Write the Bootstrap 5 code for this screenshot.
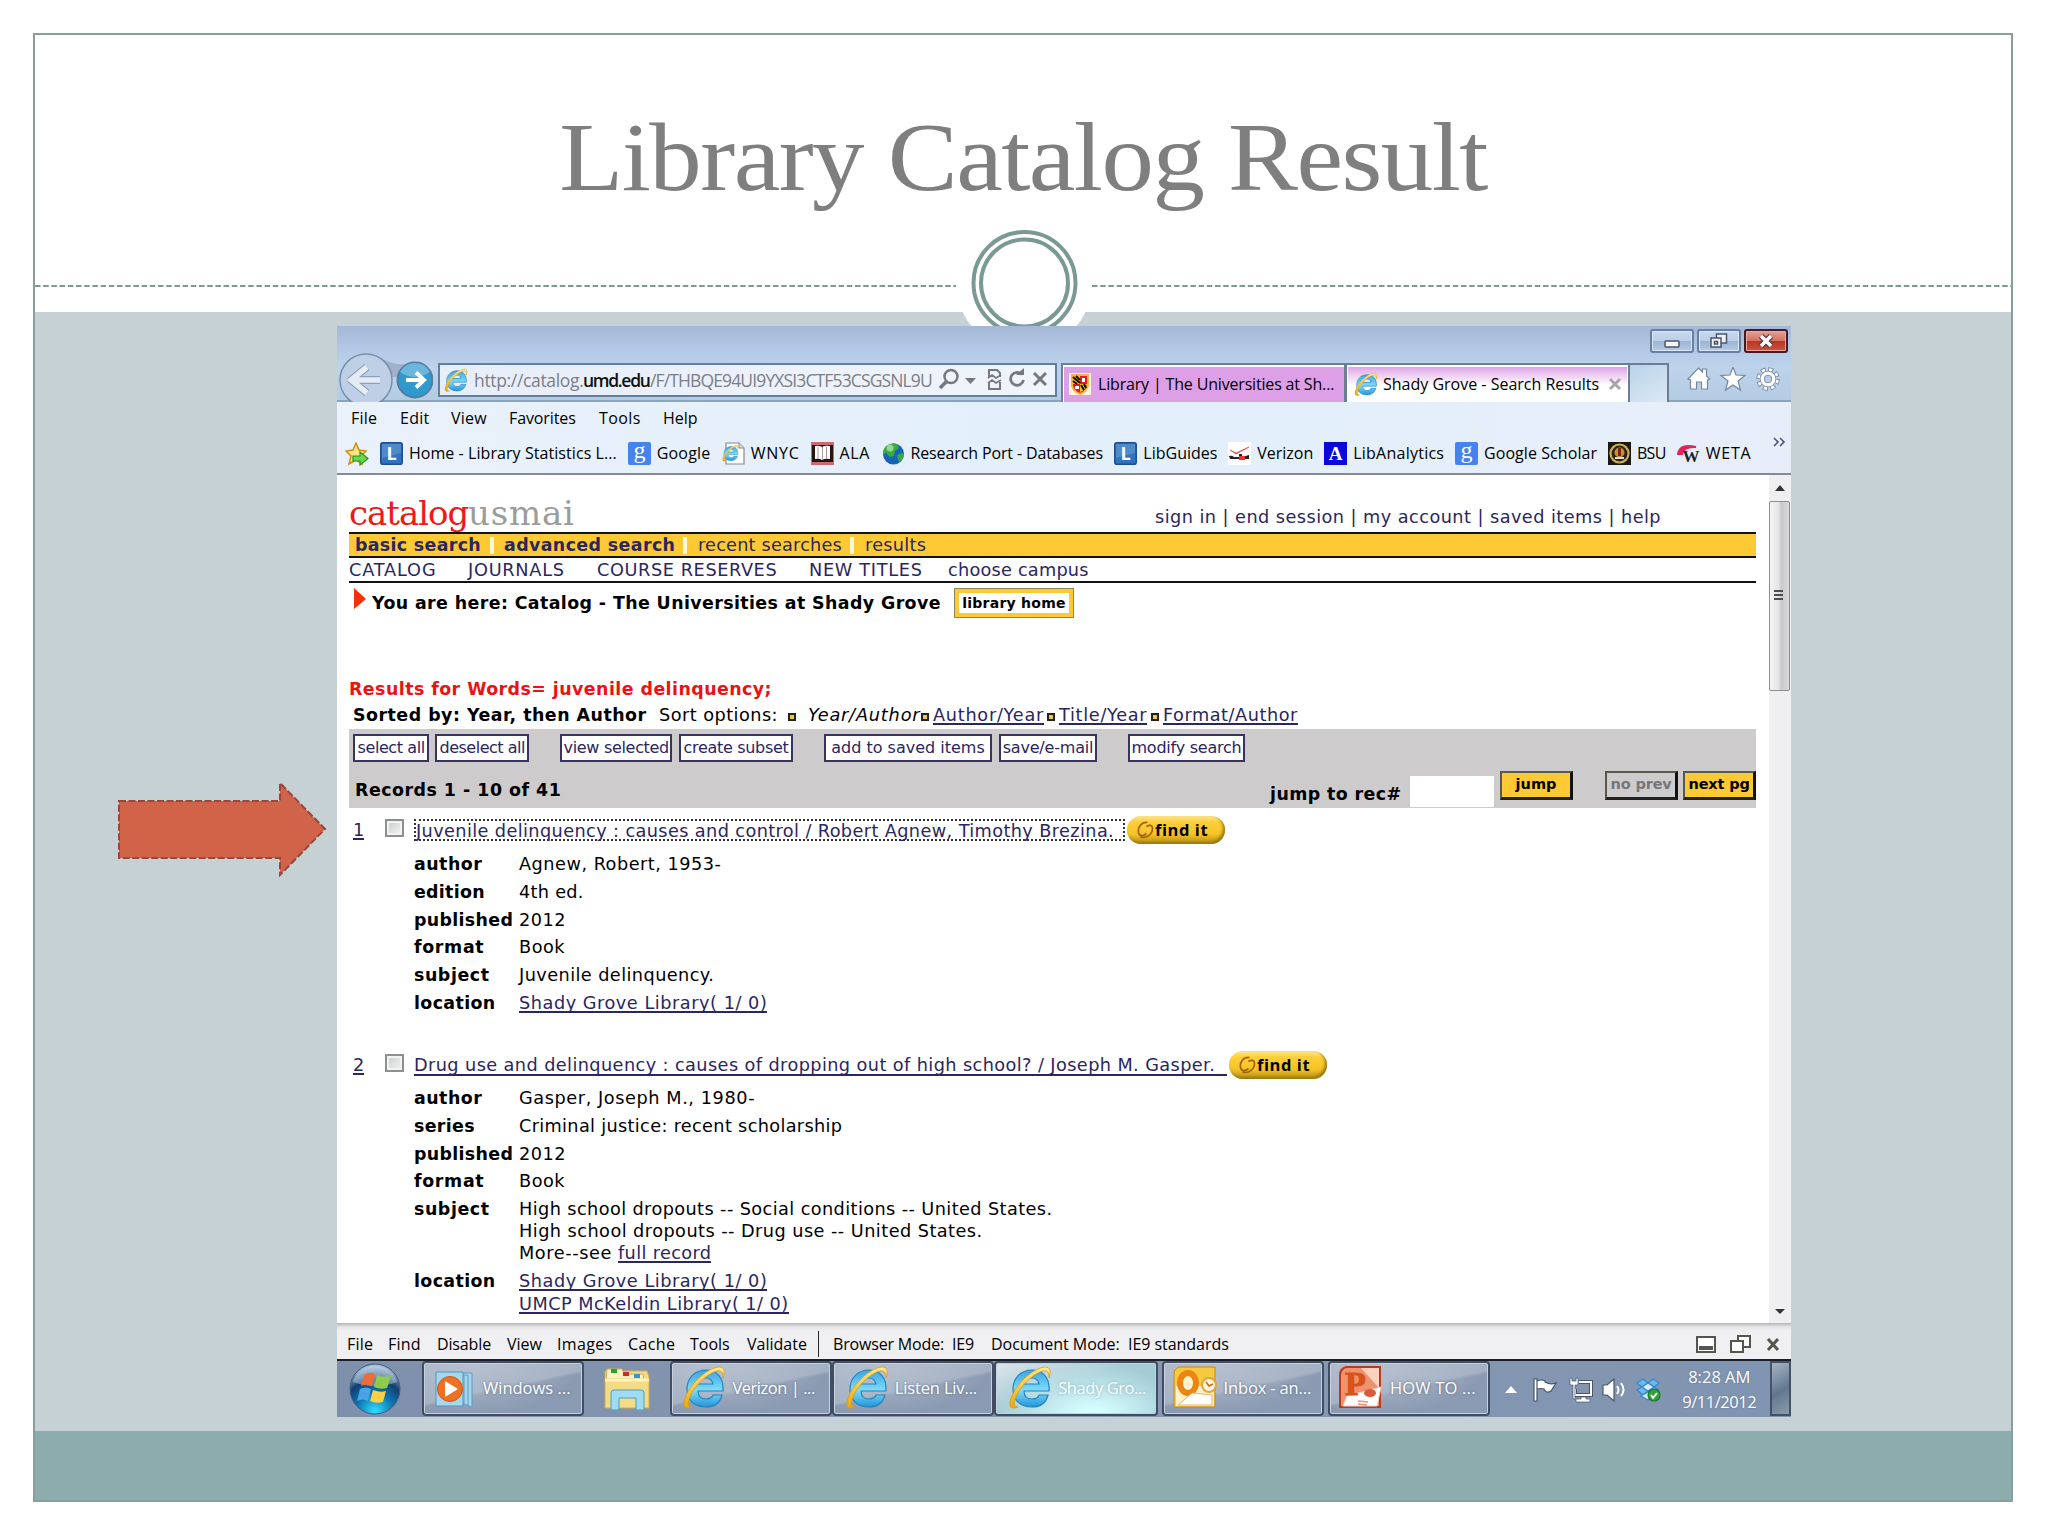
<!DOCTYPE html>
<html lang="en">
<head>
<meta charset="utf-8">
<title>Library Catalog Result</title>
<link href="https://cdn.jsdelivr.net/npm/bootstrap@5.3.0/dist/css/bootstrap.min.css" rel="stylesheet">
<style>
body{margin:0;background:#fff;width:2048px;height:1536px;overflow:hidden;color:#000}
span[data-w]{display:inline-block;white-space:pre;flex:none}
svg{display:block;flex:none}
.slide{margin:33px 35px 0 33px;height:1469px;border:2px solid #86a09c;background:#fff}
.slide-head{height:277px}
.slide-title{font:400 98px/112px "Liberation Serif",serif;color:#7f7f7f;padding-top:66px;margin:0;transform:scaleX(1.07)}
.stage{height:1119px;background:#c5d1d4;padding:14px 0 0 302px}
.slide-foot{height:69px;background:#8cacad}
.ornament{left:35px;top:225px;width:1976px;height:101px}
.pointer{left:116px;top:779px}
/* browser window */
.win{width:1454px;height:1091px;background:#fff;font-family:"Open Sans","Noto Sans",sans-serif;font-size:16px}
.chrome{height:76px;background:linear-gradient(#a3b8d6,#b1c5e3 25%,#bdd3ec 55%,#b4cbe4);border-bottom:2px solid #8ba4bd}
.caps{height:37px;padding:3px 3px 0 0;gap:3px}
.cap-btn{width:44px;height:24px;border:2px solid #66809f;border-radius:3px;background:linear-gradient(#c7d8ec,#bccfe7 48%,#9cb5d3 52%,#b5cbe6);box-shadow:inset 0 0 0 1px #d9e6f5}
.cap-close{border-color:#431b27;background:linear-gradient(#e2a297,#d5705f 48%,#bb3524 52%,#c95440);box-shadow:inset 0 0 0 1px #e8aaa0}
.nav-row{height:38px}
.addr{margin-left:5px;width:619px;height:34px;border:2px solid #61809f;background:linear-gradient(90deg,#e7eef9,#f0f4fb);color:#7b7e85;font-size:17.5px}
.addr b{color:#111;font-weight:600}
.tab-a{width:285px;height:39px;margin-left:4px;border:2px solid #6b7e94;border-bottom:0;background:#dd9fe6;box-shadow:inset 1px 2px #fff;padding-left:6px;gap:7px}
.tab-b{width:284px;height:39px;border:2px solid #6b7e94;border-left-width:1px;border-bottom:0;background:linear-gradient(#da9be4,#fff 55%);box-shadow:inset 1px 2px #fff,inset -1px 0 #fff;padding-left:7px}
.tab-n{width:39px;height:39px;border:2px solid #6b7e94;border-left:0;border-bottom:0;background:linear-gradient(150deg,#b9d3e8,#dce8f6)}
.bars{height:73px;background:linear-gradient(90deg,#eaf1fb,#e3effa 45%,#e3effa 65%,#e8eef9);border-bottom:2px solid #868b93}
.menu-row{height:32px;padding-left:14px;line-height:32px}
.fav-row{height:39px;padding-left:8px;gap:11px;line-height:23px}
.fav{gap:5.9px}
.view{height:848px}
/* catalog page */
.page{width:1432px;padding-left:12px;font-family:"DejaVu Sans",Verdana,sans-serif;font-size:17.7px;line-height:22px}
.page a,.ink{color:#2a2660;text-decoration:none}
.page a.ul{border-bottom:2px solid #2a2660;display:inline-block;height:20px;line-height:21px}
.page b{font-weight:700;font-size:17.4px}
.wide{width:1407px}
.logo{font:34px/40px "DejaVu Serif",serif}
.logo-red{color:#f01818}
.logo-gray{color:#9c9c9c}
.ybar{height:26px;border-top:2px solid #111;border-bottom:2px solid #111;background:#fdca36;line-height:23px;padding-top:1px}
.sep{width:4px;height:17px;background:#fff6dc}
.cbar{height:25px;border-bottom:2px solid #111;line-height:24px}
.home-btn{width:120px;height:30px;border:1px solid #8e8555;background:#fdca36;padding:4px}
.home-btn>div{background:#fff;font-weight:700;font-size:14px;line-height:20px;height:20px;text-align:center}
.sq{width:8px;height:8px;border:2px solid #222;background:#f5c83a}
.tools{height:79px;background:#cdcbcc}
.tbtn{height:28px;border:2px solid #39345f;background:#fff;color:#2a2660;font-size:16px;line-height:23px;text-align:center}
.ybtn{width:73px;height:29px;border:2px solid #565a4a;border-right:3px solid #111;border-bottom:3px solid #222;background:#fdca36;font-weight:700;font-size:14.5px;line-height:23px;text-align:center}
.ybtn.off{background:#cdcbcc;color:#77757a}
.rec-no{width:36px;padding-left:4px}
.chk{width:19px;height:18px;border:2px solid #8e8f8f;background:linear-gradient(135deg,#c9cccf,#f4f4f4);box-shadow:inset 0 0 0 2px #f2f2f2}
.rt{margin-left:10px}
.focus-t{border:2px dotted #333;height:22px;line-height:20px;width:711px;margin-top:-1px}
.under-t{border-bottom:2px solid #2a2660;height:21px;line-height:21px;width:813px;margin-top:1px}
.find{width:98px;height:28px;border-radius:14px;background:linear-gradient(#ffe48f,#fccf38 22%,#f5c425 65%,#b38c14);box-shadow:inset -2px -2px 3px #9a7a10;font:700 16.5px/26px "Open Sans",sans-serif;padding:0 0 1px 9px}
.fld{padding:0 0 6px 65px;line-height:21.8px}
.fld>b{width:105px;flex:none}
/* scrollbar */
.sbar{width:22px;background:#efeff1}
.thumb{width:21px;height:190px;border:1.5px solid #8d8e91;border-radius:2px;background:linear-gradient(90deg,#f5f5f6,#e4e4e6 45%,#c9c9cc 60%,#d8d8db)}
/* developer tools bar and taskbar */
.dev{height:38px;background:linear-gradient(#b5b5b8,#e6e5e7 4px,#f0eff1 8px);border-bottom:2px solid #191e28;line-height:42px}
.task{height:56px;background:linear-gradient(90deg,#7f90ac,#8797b0 50%,#8095b2);color:#fff;font-size:16.5px}
.tb{height:55px;border:2px solid #414d62;border-radius:4px;box-shadow:inset 0 0 0 1px #c7d1dd;text-shadow:0 0 3px #55657c}
.tb.flat{background:radial-gradient(ellipse at 30% 0,#b6c0cf,transparent 70%),linear-gradient(168deg,#a4b1c3 48%,#8b9ab1 52%,#8a9bb4)}
.tb.on{background:radial-gradient(ellipse at 60% 110%,#d8ffff 10%,transparent 70%),linear-gradient(160deg,#dce5ea,#a6ccd5 45%,#9fc9d4);text-shadow:0 0 3px #7ea8b6}
.clock{line-height:24.5px;text-shadow:0 0 2px #5e6f87}
.peek{width:21px;height:55px;border:2px solid #445263;background:linear-gradient(150deg,#a7b4c2,#7488a0 40%,#62778f 55%,#8a9cad)}
</style>
<script src="https://cdn.jsdelivr.net/npm/bootstrap@5.3.0/dist/js/bootstrap.bundle.min.js"></script>
</head>
<body class="position-relative">
<svg width="0" height="0" class="position-absolute">
<defs>
<linearGradient id="gb" x1="0" y1="0" x2="0" y2="1"><stop offset="0" stop-color="#3aa5e2"/><stop offset=".55" stop-color="#7ddcfb"/><stop offset="1" stop-color="#2196d8"/></linearGradient>
<linearGradient id="gy" x1="0" y1="0" x2="0" y2="1"><stop offset="0" stop-color="#ffe98f"/><stop offset="1" stop-color="#e9a70d"/></linearGradient>
<radialGradient id="orb" cx=".5" cy=".95" r=".9"><stop offset="0" stop-color="#2fe0ff"/><stop offset=".4" stop-color="#0e78b4"/><stop offset=".7" stop-color="#123f70"/><stop offset="1" stop-color="#9fb8d0"/></radialGradient>
<symbol id="ie" viewBox="0 0 44 44"><path d="M41 26H16c0 5 3 8 8 8 3 0 6-1 7-4h9c-2 8-8 12-16 12C12 42 5 35 5 24S13 5 24 5s18 8 17 21zM16 19h15c-1-4-3-6-7-6s-7 2-8 6z" fill="url(#gb)" stroke="#2583bd" stroke-width="1.2"/><path d="M41 13C43 7 43 2 37 2 25 3 8 19 3 33c-3 9 0 12 7 9-4 0-5-3-2-10C13 20 26 8 35 6c4-1 6 1 6 7z" fill="url(#gy)" stroke="#d99b13" stroke-width=".8"/></symbol>
<symbol id="lib" viewBox="0 0 23 23"><rect x=".8" y=".8" width="21.4" height="21.4" rx="2" fill="#3273bd" stroke="#1c4f93" stroke-width="1.6"/><path d="M2 2h19v9L2 16z" fill="#6ea2da" opacity=".5"/><text x="6.500" y="17.500" font-family="Open Sans" font-weight="700" font-size="18" fill="#fff">L</text></symbol>
<symbol id="goo" viewBox="0 0 23 23"><rect width="23" height="23" rx="2" fill="#4584ee"/><text x="11.500" y="16" text-anchor="middle" font-family="Liberation Serif" font-size="24" fill="#fff">g</text></symbol>
<symbol id="swirl" viewBox="0 0 18 20"><path d="M11 2.500C5 2 1 7 2 12.500c1 4 4.500 4 8 1M4 17c6 2 12-3 12-8.500 0-3.500-3-4-6-2" fill="none" stroke="#a4600f" stroke-width="1.700"/></symbol>
</defs>
</svg>

<div class="slide">
  <div class="slide-head"><h1 class="slide-title text-center"><span data-w="867">Library Catalog Result</span></h1></div>
  <div class="stage">
    <div class="win overflow-hidden">
      <!-- window frame, address bar and tabs -->
      <div class="chrome">
        <div class="caps d-flex justify-content-end">
          <div class="cap-btn"><svg width="40" height="20"><rect x="13" y="10" width="14" height="6" rx="1" fill="#f5f5f5" stroke="#4b5668" stroke-width="1.500"/></svg></div>
          <div class="cap-btn"><svg width="40" height="20" fill="#eef2f7" stroke="#4b5668" stroke-width="1.500"><rect x="17.500" y="3" width="10" height="9"/><rect x="12" y="7" width="10" height="9"/><rect x="15.500" y="10.500" width="3" height="2.500"/></svg></div>
          <div class="cap-btn cap-close"><svg width="40" height="20"><path d="M15 5l10 10M25 5L15 15" stroke="#5a3440" stroke-width="6"/><path d="M15 5l10 10M25 5L15 15" stroke="#fff" stroke-width="3.500"/></svg></div>
        </div>
        <div class="nav-row d-flex align-items-start">
          <svg width="96" height="49" style="margin-top:-10px" viewBox="0 0 96 49"><path d="M46 6q14 8 30 4l-8 14H54z" fill="#9eb2cb"/><circle cx="29" cy="27" r="26" fill="#bfd0e6" stroke="#7990ad" stroke-width="1.500"/><path d="M30 14L14 27l16 13M16 27h27" fill="none" stroke="#8ba0bd" stroke-width="8" stroke-linejoin="round"/><path d="M30 14L14 27l16 13M16 27h27" fill="none" stroke="#e4ebf4" stroke-width="5.500"/><circle cx="78" cy="27" r="17.500" fill="#2f9acb" stroke="#557c9c" stroke-width="2"/><path d="M63 19a17 17 0 0 1 30 0q-15 10-30 0z" fill="#6ab6dc"/><path d="M69 27h17M79 19.500l8 7.500-8 7.500" fill="none" stroke="#fff" stroke-width="4"/></svg>
          <div class="addr d-flex align-items-center">
            <svg width="24" height="24" class="ms-1"><use href="#ie"/></svg>
            <div class="d-flex" style="margin-left:6px"><span data-w="109">http://catalog.</span><b><span data-w="67">umd.edu</span></b><span data-w="282">/F/THBQE94UI9YXSI3CTF53CSGSNL9U</span></div>
            <svg width="112" height="26" class="ms-1" fill="none" stroke="#747880"><circle cx="15" cy="9.500" r="6.500" stroke-width="2.500"/><path d="M11 14l-7 7" stroke-width="3.500"/><path d="M29 11h11l-5.500 6z" fill="#747880" stroke="none"/><path d="M53 10V3h8l3 3v4M53 15v7h11v-7" stroke-width="2"/><path d="M52 11l4-3 4 3 5-3M52 16l4-3 4 3 5-3" stroke-width="1.700"/><path d="M86 7.500a6.500 6.500 0 1 0 1.500 5.500" stroke-width="2.800"/><path d="M80 8h8V1z" fill="#747880" stroke="none"/><path d="M98 6l12 12M110 6L98 18" stroke-width="3"/></svg>
          </div>
          <div class="tab-a d-flex align-items-center">
            <svg width="22" height="22"><rect width="22" height="22" fill="#fff4dd"/><path d="M3 2h16v11q-2 6-8 8-6-2-8-8z" fill="#e01d24" stroke="#f0b352" stroke-width="2"/><path d="M4 3h7v8H4z" fill="#f6c21c"/><path d="M4 4l7 6M7 3l4 4M4 8l4 3" stroke="#111" stroke-width="2"/><path d="M11 11h7q-1 6-7 8z" fill="#f6c21c"/><path d="M12 12l3 5M15 11l2 4" stroke="#111" stroke-width="2"/><path d="M13 5h3v4h-3zM6 13h4v3H6z" fill="#fff"/></svg>
            <span data-w="236">Library | The Universities at Sh...</span>
          </div>
          <div class="tab-b d-flex align-items-center" style="gap:5px">
            <svg width="24" height="24"><use href="#ie"/></svg><span data-w="216">Shady Grove - Search Results</span>
            <svg width="14" height="14" class="ms-1"><path d="M2 2l10 10M12 2L2 12" stroke="#a9a5a9" stroke-width="3"/></svg>
          </div>
          <div class="tab-n"></div>
          <svg width="96" height="26" style="margin:4px 0 0 18px" fill="#fff" stroke="#75869d" stroke-width="1.200"><path d="M1 12L11.500 1l4 4V2h4v7l3 3-2 1v9h-6v-7h-5v7h-6v-9z"/><path d="M46 0l3 8 9 .5-7 5.500 2.500 9L46 18l-7.500 5 2.500-9-7-5.500 9-.5z"/><circle cx="81" cy="12" r="9" fill="none" stroke="#75869d" stroke-width="5.500" stroke-dasharray="4.570 2.500"/><circle cx="81" cy="12" r="9" fill="none" stroke="#fff" stroke-width="3.800" stroke-dasharray="3 4.070" stroke-dashoffset="-.8"/><circle cx="81" cy="12" r="5.800" fill="#b9cde6" stroke="#75869d" stroke-width="5"/><circle cx="81" cy="12" r="5.800" fill="none" stroke="#fff" stroke-width="3.400"/></svg>
        </div>
      </div>
      <div class="bars">
        <div class="menu-row d-flex"><span data-w="49" data-t="26">File</span><span data-w="51" data-t="29">Edit</span><span data-w="58" data-t="36">View</span><span data-w="90" data-t="67">Favorites</span><span data-w="64" data-t="42">Tools</span><span data-w="35">Help</span></div>
        <div class="d-flex justify-content-between">
        <div class="fav-row d-flex align-items-center">
          <svg width="24" height="24"><path d="M11 1l3 7 7 1-5 5 1 8-6-4-7 4 2-8-5-5 7-1z" fill="#fce487" stroke="#d08c12" stroke-width="1.500"/><path d="M8 14h7v-4l8 6.500-8 6.500v-4H8z" fill="#6fd54b" stroke="#2a9320" stroke-width="1.200"/></svg>
          <div class="fav d-flex align-items-center"><svg width="23" height="23"><use href="#lib"/></svg><span data-w="208">Home - Library Statistics L...</span></div>
          <div class="fav d-flex align-items-center"><svg width="23" height="23"><use href="#goo"/></svg><span data-w="54">Google</span></div>
          <div class="fav d-flex align-items-center"><svg width="23" height="23"><path d="M4 1h13l5 5v16H4z" fill="#fff" stroke="#888" stroke-width="1.200"/><path d="M17 1v5h5" fill="#ddd" stroke="#888"/><svg x="0" y="2" width="17" height="18"><use href="#ie"/></svg></svg><span data-w="49">WNYC</span></div>
          <div class="fav d-flex align-items-center"><svg width="23" height="23"><path fill="#c96a70" d="M0 0h23v23H0z"/><path fill="#2a1512" d="M1 3h21v17H1z"/><path d="M4 4q4-1 7 1 3-2 8-1v13q-5-1-8 1-3-2-7-1z" fill="#fff"/><path d="M11.500 5v13M7 5v12M15.500 5v12" stroke="#a99"/></svg><span data-w="31">ALA</span></div>
          <div class="fav d-flex align-items-center"><svg width="23" height="23"><circle cx="11.500" cy="12" r="10.500" fill="#1763b8"/><path d="M4 4q6-4 11-2l2 4-4 3-1 5-4 1-4-4-3 1q0-5 3-8zM15 13l5-2 2 2q-1 5-5 7z" fill="#37ab3f"/><circle cx="8" cy="6" r="3.500" fill="#d7f7c8" opacity=".6"/></svg><span data-w="193">Research Port - Databases</span></div>
          <div class="fav d-flex align-items-center"><svg width="23" height="23"><use href="#lib"/></svg><span data-w="74">LibGuides</span></div>
          <div class="fav d-flex align-items-center"><svg width="23" height="23"><path fill="#fff" d="M0 0h23v23H0z"/><path d="M2 8l6 3 13-6-13 7z" fill="#e23a3a" stroke="#e23a3a" stroke-width=".6"/><path d="M1 14q3-1 5 1h5v-3h3v3l7-2v4H2z" fill="#222"/><path d="M11 14h6v4h-6z" fill="#e33"/></svg><span data-w="56">Verizon</span></div>
          <div class="fav d-flex align-items-center"><svg width="23" height="23"><path fill="#0808d8" d="M0 0h23v23H0z"/><text x="11.500" y="18" text-anchor="middle" font-family="Liberation Serif" font-weight="700" font-size="19" fill="#fff">A</text></svg><span data-w="91">LibAnalytics</span></div>
          <div class="fav d-flex align-items-center"><svg width="23" height="23"><use href="#goo"/></svg><span data-w="113">Google Scholar</span></div>
          <div class="fav d-flex align-items-center"><svg width="23" height="23"><path fill="#1b1712" d="M0 0h23v23H0z"/><circle cx="11.500" cy="11.500" r="9" fill="#2c2315" stroke="#cdae52" stroke-width="2.200"/><circle cx="11.500" cy="10.500" r="5" fill="#c78c35"/><path d="M11.500 6v8" stroke="#7a2415" stroke-width="3"/><path d="M7 16h9" stroke="#ddd" stroke-width="2"/></svg><span data-w="29">BSU</span></div>
          <div class="fav d-flex align-items-center"><svg width="23" height="23"><path d="M1 12Q3 1 19 5q-12-1-14 7z" fill="#e0245c" stroke="#e0245c" stroke-width="2"/><text x="14" y="20" text-anchor="middle" font-family="Liberation Serif" font-weight="700" font-size="17" fill="#222">W</text></svg><span data-w="46">WETA</span></div>
        </div>
        <svg width="14" height="12" class="me-1" style="margin-top:3px"><path d="M1 1l4 4-4 4M7 1l4 4-4 4" fill="none" stroke="#4a5273" stroke-width="1.600"/></svg>
        </div>
      </div>

      <div class="view d-flex">
        <div class="page">
          <div class="wide d-flex justify-content-between" style="height:57px;padding-top:18px">
            <div class="logo"><span data-w="119" class="logo-red">catalog</span><span data-w="107" class="logo-gray">usmai</span></div>
            <div class="ink" style="padding:13px 95px 0 0;height:39px"><span data-w="506">sign in | end session | my account | saved items | help</span></div>
          </div>
          <div class="ybar wide d-flex align-items-center ink"><b style="margin-left:6px"><span data-w="126">basic search</span></b><i class="sep" style="margin:0 10px 0 9px"></i><b><span data-w="171">advanced search</span></b><i class="sep" style="margin:0 11px 0 8px"></i><span data-w="144">recent searches</span><i class="sep" style="margin:0 11px 0 8px"></i><span data-w="61">results</span></div>
          <div class="cbar wide d-flex ink"><span data-w="119" data-t="87">CATALOG</span><span data-w="129" data-t="97">JOURNALS</span><span data-w="212" data-t="180">COURSE RESERVES</span><span data-w="139" data-t="114">NEW TITLES</span><span data-w="141">choose campus</span></div>
          <div class="d-flex align-items-center" style="margin-top:5px;height:30px">
            <svg width="13" height="22" style="margin:-9px 5px 0 5px"><path d="M0 0l12 11L0 21z" fill="#f5300a"/></svg>
            <b style="margin-top:-1px"><span data-w="569">You are here: Catalog - The Universities at Shady Grove</span></b>
            <div class="home-btn" style="margin-left:13px"><div><span data-w="104">library home</span></div></div>
          </div>
          <div style="margin-top:60px;color:#ee1111"><b><span data-w="423">Results for Words= juvenile delinquency;</span></b></div>
          <div class="d-flex align-items-center" style="margin-top:4px;height:22px;padding-left:4px"><b><span data-w="294">Sorted by: Year, then Author</span></b><span data-w="119" style="margin-left:12px">Sort options:</span><i class="sq" style="margin:4px 12px 0 10px"></i><i><span data-w="112">Year/Author</span></i><i class="sq" style="margin:4px 4px 0 1px"></i><a class="ul"><span data-w="111">Author/Year</span></a><i class="sq" style="margin:4px 4px 0 3px"></i><a class="ul"><span data-w="88">Title/Year</span></a><i class="sq" style="margin:4px 4px 0 4px"></i><a class="ul"><span data-w="135">Format/Author</span></a></div>
          <div class="tools wide" style="margin-top:3px">
            <div class="d-flex" style="padding:5px 0 0 4px">
              <div class="tbtn" style="width:76px"><span data-w="67">select all</span></div>
              <div class="tbtn" style="width:94px;margin-left:6px"><span data-w="85">deselect all</span></div>
              <div class="tbtn" style="width:112px;margin-left:31px"><span data-w="105">view selected</span></div>
              <div class="tbtn" style="width:114px;margin-left:7px"><span data-w="105">create subset</span></div>
              <div class="tbtn" style="width:168px;margin-left:31px"><span data-w="154">add to saved items</span></div>
              <div class="tbtn" style="width:98px;margin-left:7px"><span data-w="91">save/e-mail</span></div>
              <div class="tbtn" style="width:117px;margin-left:31px"><span data-w="110">modify search</span></div>
            </div>
            <div class="d-flex" style="height:46px">
              <b style="margin:17px 0 0 6px"><span data-w="206">Records 1 - 10 of 41</span></b>
              <b class="ms-auto" style="margin-top:21px"><span data-w="132">jump to rec#</span></b>
              <div class="bg-white" style="width:84px;height:31px;margin:14px 6px 0 8px"></div>
              <div class="ybtn" style="margin-top:9px"><span data-w="41">jump</span></div>
              <div class="ybtn off" style="margin:9px 5px 0 32px"><span data-w="61">no prev</span></div>
              <div class="ybtn" style="margin-top:9px"><span data-w="61">next pg</span></div>
            </div>
          </div>

          <div class="d-flex align-items-center" style="margin-top:8px;height:28px">
            <div class="rec-no"><a class="ul"><span data-w="11">1</span></a></div><div class="chk" style="margin-top:-4px"></div>
            <a class="rt focus-t"><span data-w="698">Juvenile delinquency : causes and control / Robert Agnew, Timothy Brezina.</span></a>
            <div class="find d-flex align-items-center" style="margin-left:2px"><svg width="19" height="20"><use href="#swirl"/></svg><span data-w="53">find it</span></div>
          </div>
          <div style="padding-top:10px;height:207px">
            <div class="fld d-flex"><b><span data-w="68">author</span></b><span data-w="202">Agnew, Robert, 1953-</span></div>
            <div class="fld d-flex"><b><span data-w="71">edition</span></b><span data-w="65">4th ed.</span></div>
            <div class="fld d-flex"><b><span data-w="99">published</span></b><span data-w="47">2012</span></div>
            <div class="fld d-flex"><b><span data-w="70">format</span></b><span data-w="46">Book</span></div>
            <div class="fld d-flex"><b><span data-w="76">subject</span></b><span data-w="195">Juvenile delinquency.</span></div>
            <div class="fld d-flex"><b><span data-w="82">location</span></b><a class="ul"><span data-w="248">Shady Grove Library( 1/ 0)</span></a></div>
          </div>
          <div class="d-flex align-items-center" style="height:28px">
            <div class="rec-no"><a class="ul"><span data-w="11">2</span></a></div><div class="chk" style="margin-top:-4px"></div>
            <a class="rt under-t"><span data-w="801">Drug use and delinquency : causes of dropping out of high school? / Joseph M. Gasper.</span></a>
            <div class="find d-flex align-items-center" style="margin-left:2px"><svg width="19" height="20"><use href="#swirl"/></svg><span data-w="53">find it</span></div>
          </div>
          <div style="padding-top:9px">
            <div class="fld d-flex"><b><span data-w="68">author</span></b><span data-w="236">Gasper, Joseph M., 1980-</span></div>
            <div class="fld d-flex"><b><span data-w="61">series</span></b><span data-w="323">Criminal justice: recent scholarship</span></div>
            <div class="fld d-flex"><b><span data-w="99">published</span></b><span data-w="47">2012</span></div>
            <div class="fld d-flex"><b><span data-w="70">format</span></b><span data-w="46">Book</span></div>
            <div class="fld d-flex"><b><span data-w="76">subject</span></b><div><div><span data-w="533">High school dropouts -- Social conditions -- United States.</span></div><div><span data-w="464">High school dropouts -- Drug use -- United States.</span></div><div class="d-flex"><span data-w="99">More--see </span><a class="ul"><span data-w="93">full record</span></a></div></div></div>
            <div class="fld d-flex"><b><span data-w="82">location</span></b><div><div class="d-flex"><a class="ul"><span data-w="248">Shady Grove Library( 1/ 0)</span></a></div><div class="d-flex" style="padding-top:3px"><a class="ul"><span data-w="270">UMCP McKeldin Library( 1/ 0)</span></a></div></div></div>
          </div>
        </div>
        <div class="sbar d-flex flex-column">
          <svg width="22" height="26"><path d="M6 16l5-6 5 6z" fill="#333"/></svg>
          <div class="thumb"><svg width="19" height="100"><path d="M4 89h9M4 93h9M4 97h9" stroke="#4c4c55" stroke-width="2"/></svg></div>
          <svg width="22" height="26" class="mt-auto"><path d="M6 12l5 5 5-5z" fill="#333"/></svg>
        </div>
      </div>

      <div class="dev d-flex" style="padding-left:10px">
        <span data-w="41" data-t="26">File</span><span data-w="49" data-t="33">Find</span><span data-w="70" data-t="54">Disable</span><span data-w="50" data-t="35">View</span><span data-w="71" data-t="55">Images</span><span data-w="62" data-t="47">Cache</span><span data-w="57" data-t="40">Tools</span><span data-w="71" data-t="60">Validate</span>
        <div class="border-start border-dark" style="height:26px;margin:8px 14px 0 0"></div>
        <span data-w="158" data-t="141">Browser Mode:  IE9</span><span data-w="238">Document Mode:  IE9 standards</span>
        <svg width="90" height="20" class="ms-auto" style="margin:12px 7px 0 0" fill="#fff" stroke="#55554e" stroke-width="2"><rect x="3" y="2" width="18" height="15"/><path d="M5 13h14" stroke-width="4"/><rect x="44" y="1" width="12" height="11"/><rect x="37" y="6" width="12" height="11"/><path d="M74 4l10 11M84 4L74 15" stroke-width="3"/></svg>
      </div>
      <div class="task d-flex align-items-start">
        <svg width="52" height="54" style="margin:1px 21px 0 12px" viewBox="0 0 52 54"><circle cx="26" cy="27" r="25" fill="url(#orb)" stroke="#3f5f84"/><path d="M4 20a23 23 0 0 1 44 0q-22 8-44 0z" fill="#dbe6f2" opacity=".4"/><path d="M15 13q6-4 11-1l-3 12q-5-3-11 0z" fill="#ef6c38"/><path d="M28 13q6 3 14 1l-4 12q-7 2-13-1z" fill="#8fcb4c"/><path d="M11 27q6-3 11 0l-3 12q-5-3-11 0z" fill="#4aa3e6"/><path d="M24 28q7 3 13 1l-3 11q-7 2-13-1z" fill="#fccf45"/></svg>
        <div class="tb flat d-flex align-items-center" style="width:163px"><svg width="40" height="38" style="margin:2px 8px 0 11px"><path d="M8 2h29v34l-8-3V4M5 4h28v32" fill="#a8d5ec" stroke="#5b9cc3"/><path d="M1 1h27v34H1z" fill="#a7d7ee" stroke="#4f96c2"/><circle cx="15" cy="18" r="12.500" fill="#ee7122" stroke="#d05a12"/><path d="M10 10v16l13-8z" fill="#fff"/></svg><span data-w="87">Windows ...</span></div>
        <svg width="47" height="44" style="margin:7px 19px 0 20px"><path d="M1 3h42l2 6v31H1z" fill="#f4dc86" stroke="#d0ae4c"/><path d="M3 1h15l2 5h19l1 5H2z" fill="#fff3bd" stroke="#d0ae4c"/><path d="M7 1h6v4H7z" fill="#26a52a"/><path d="M19 4h6v4h-6z" fill="#c53026"/><path d="M30 6h6v4h-6z" fill="#3197d6"/><path d="M1 12h44" stroke="#fff2bd" stroke-width="3"/><path d="M7 42V25q0-3 3-3h27q3 0 3 3v17h-8V30H15v12z" fill="#9fdcf1" stroke="#4a9cc8"/></svg>
        <div class="tb flat d-flex align-items-center" style="width:162px"><svg width="44" height="44" style="margin:0 6px 3px 10px"><use href="#ie"/></svg><span data-w="82">Verizon | ...</span></div>
        <div class="tb flat d-flex align-items-center" style="width:163px"><svg width="44" height="44" style="margin:0 6px 3px 11px"><use href="#ie"/></svg><span data-w="82">Listen Liv...</span></div>
        <div class="tb on d-flex align-items-center" style="width:164px"><svg width="44" height="44" style="margin:0 6px 3px 12px"><use href="#ie"/></svg><span data-w="88">Shady Gro...</span></div>
        <div class="tb flat d-flex align-items-center" style="width:163px;margin-left:4px"><svg width="44" height="42" style="margin:0 7px 3px 9px"><path d="M6 1h36v40H1V8q0-5 5-7z" fill="#f8c93e" stroke="#c58a12"/><path d="M3 20h38v20H3z" fill="#fff1c8"/><ellipse cx="15" cy="17" rx="8" ry="10" fill="#fff3cf" stroke="#ec8412" stroke-width="6"/><path d="M5 39l14-12 20 2v10z" fill="#fff" stroke="#e2b36c"/><circle cx="36" cy="19" r="7" fill="#fff6dd" stroke="#e3a340" stroke-width="2"/><path d="M33 16l3 4 4-2" fill="none" stroke="#c56c14" stroke-width="1.500"/></svg><span data-w="88">Inbox - an...</span></div>
        <div class="tb flat d-flex align-items-center" style="width:163px;margin-left:4px"><svg width="44" height="42" style="margin:0 7px 3px 9px"><path d="M7 1h34v40H1V9q0-6 6-8z" fill="#f0926e" stroke="#b93a1c" stroke-width="2"/><path d="M22 2h18v20z" fill="#fbd2c0"/><path d="M8 30l34-9-4 19H4z" fill="#fff" stroke="#f3d3c6"/><ellipse cx="31" cy="27" rx="6" ry="4" fill="#dc5a36"/><path d="M19 35l10 1M19 38l9 1" stroke="#e5937a" stroke-width="1.500"/><text x="6" y="29" font-family="Liberation Serif" font-weight="700" font-size="34" fill="#d6541b" stroke="#d6541b" style="text-shadow:none">P</text></svg><span data-w="86">HOW TO ...</span></div>
        <svg width="176" height="30" style="margin:14px 18px 0 15px" fill="#fff" stroke="#48566d" stroke-width="1.200"><path d="M0 18l6-7 6 7z" stroke="none"/><path d="M29 4h3v22h-3zM32 6q5-2 8 0v1q5 3 11 1l-5 8q-5 3-7-2-3-1-7 0z"/><path d="M74 7h12v13H70v-6" fill="none" stroke="#48566d" stroke-width="4"/><path d="M74 7h12v13H70v-6" fill="none" stroke="#fff" stroke-width="2"/><path d="M65 3v7h3v14h2V10h3V3h-2v3h-4V3zM76 22h5v2h4v3H71v-3h5z" stroke-width=".7"/><path d="M98 10h4l7-6v22l-7-6h-4z"/><path d="M112 11q3 4 0 8M116 8q5 7 0 13" fill="none" stroke="#fff" stroke-width="2"/><g stroke="#3387d0" fill="#d8efff"><path d="M132 8l6-4 5 4-6 4zM143 8l5-4 6 4-5 4zM132 15l5-3 6 4-5 4zM143 16l6-4 5 3-6 5z" fill="#6cb9f1"/><path d="M137 12l6-4 6 4-6 4zM136 21l7-4 7 4-7 4z"/></g><circle cx="149" cy="20" r="6" fill="#33a23a" stroke="#177a24"/><path d="M146 20l2 3 4-5" fill="none" stroke="#fff" stroke-width="1.800"/></svg>
        <div class="clock text-center" style="width:78px;margin:4px 12px 0 -19px"><span data-w="62">8:28 AM</span><br><span data-w="74">9/11/2012</span></div>
        <div class="peek ms-auto"></div>
      </div>
    </div>
  </div>
  <div class="slide-foot"></div>
</div>

<!-- ring ornament on the divider; its lower edge passes behind the window -->
<svg class="ornament position-absolute" viewBox="35 225 1976 101"><circle cx="1024" cy="283" r="68" fill="#fff"/><path d="M35 286H956M1092 286H2011" stroke="#789b93" stroke-width="2" stroke-dasharray="5.500 2.700"/><circle cx="1024.500" cy="283" r="51" fill="#fff" stroke="#7b9994" stroke-width="4"/><circle cx="1024.500" cy="283" r="43.500" fill="#fff" stroke="#7b9994" stroke-width="4"/></svg>
<svg class="pointer position-absolute" width="212" height="98"><path d="M3 22H164V4l45 46-45 46V79H3z" fill="#d16349" stroke="#99473a" stroke-width="2" stroke-dasharray="7 2.500"/></svg>

<script>
// Track each label so that its text spans data-t pixels (data-w when absent) in a data-w wide box.
document.querySelectorAll('span[data-w]').forEach(function (s) {
  var w = +s.dataset.w, t = +(s.dataset.t || w), n = s.textContent.length;
  s.style.letterSpacing = ((t - s.offsetWidth) / n).toFixed(3) + 'px';
  s.style.width = w + 'px';
});
</script>
</body>
</html>
